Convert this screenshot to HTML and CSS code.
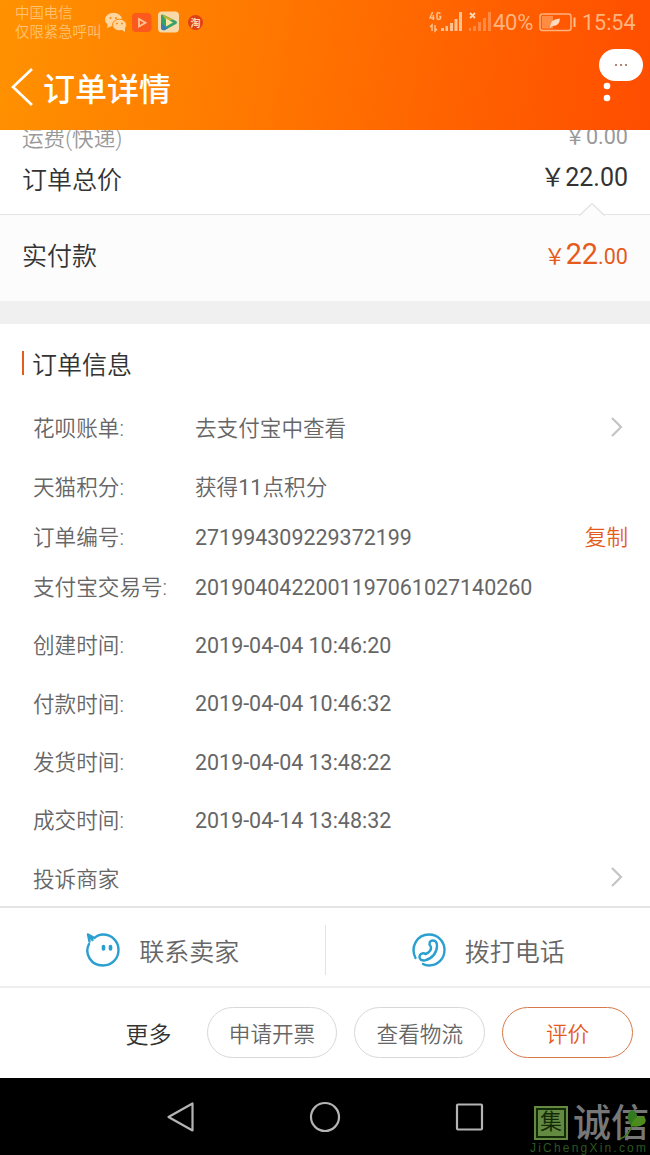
FILE: index.html
```html
<!DOCTYPE html>
<html lang="zh-CN">
<head>
<meta charset="utf-8">
<title>订单详情</title>
<link rel="stylesheet" href="styles.css">
</head>
<body>
<div class="screen">
  <header class="header">
    <div class="status">
      <div class="carrier"><span>中国电信</span><span>仅限紧急呼叫</span></div>
      <svg class="apps" width="102" height="26" viewBox="0 0 102 26">
        <g fill="#ffd6a0"><ellipse cx="9.500" cy="9.500" rx="8.500" ry="6.800"/><path d="M4 14l-1 4 5-2z"/></g>
        <ellipse cx="15.500" cy="15" rx="7" ry="5.800" fill="#ffd6a0" stroke="#ff8b0c"/>
        <path d="M17 19l4 3v-4z" fill="#ffd6a0"/>
        <g fill="#ff8b0c"><circle cx="6.500" cy="8" r="1.100"/><circle cx="12" cy="8" r="1.100"/><circle cx="13" cy="13.500" r="1"/><circle cx="18" cy="13.500" r="1"/></g>
        <rect x="28" y="3" width="19.500" height="19" rx="4" fill="#fb5a1c"/>
        <path d="M35 9l6.500 3.700-6.500 3.800z" fill="none" stroke="#ffc495" stroke-width="1.800"/>
        <rect x="54" y="1.500" width="21" height="21" rx="4" fill="#f8d9a9"/>
        <path d="M57 5q1-1 3 0l12 6q2 1.500 0 3l-11 6q-3 1-4-2z" fill="#36a26a"/>
        <path d="M57 13.500l7 4.500-3 2q-4 1-4-3z" fill="#397cb6"/><path d="M58 4.500l11 5-6 2z" fill="#c7b12a"/>
        <path d="M62 8.500l7 4-7 4z" fill="#f5e6a6"/>
        <circle cx="91.500" cy="12.500" r="7.500" fill="#dc4216"/>
        <text class="app-label" x="86.500" y="16.500">淘</text>
      </svg>
      <svg class="signals" width="64" height="26" viewBox="0 0 64 26">
        <g fill="none" stroke="#ffc18f" stroke-width="1.500"><path d="M3.600 2L1 8h4.500M4.300 5v5M11.500 3.500q-3.500-2-3.500 1v3q0 2 1.700 2 2 0 2-3h-1.500"/><path d="M3 21v-6l-2 2M6 15v6l2-2"/></g>
        <g fill="#ffc18f"><path d="M12 18h3v3h-3zM16.500 16h2.500v5h-2.500zM21 13h3v8h-3zM25.500 9h3v12h-3zM30 2h3v19h-3z"/></g>
        <path d="M41 3l5 5m0-5l-5 5" stroke="#ffd7b7" stroke-width="1.800"/>
        <g fill="#ff8a45"><path d="M40 18h2v3h-2zM44 16h3v5h-3zM49 12h3v9h-3zM54 8h3v13h-3zM59 2h3v19h-3z"/></g>
      </svg>
      <span class="percent">40%</span>
      <svg class="battery" width="38" height="20" viewBox="0 0 38 20">
        <rect x="1" y="1" width="31" height="16.500" rx="2.500" fill="none" stroke="#ffb47d" stroke-width="1.500"/>
        <rect x="3" y="3" width="11" height="12.500" fill="#ff8c42"/>
        <path d="M34.500 4.500h2v9.500h-2z" fill="#ffc18f"/>
        <path d="M11 14q0-8 10-8.500-.500 8-8 7.500l-1.500 2z" fill="#ffdbbd"/>
      </svg>
      <span class="clock">15:54</span>
    </div>
    <div class="titlebar">
      <svg class="back" width="24" height="40" viewBox="0 0 24 40"><path d="M21 2L2 20l19 18" fill="none" stroke="#fff" stroke-width="2.600"/></svg>
      <h1 class="title">订单详情</h1>
      <svg class="kebab" width="8" height="30" viewBox="0 0 8 30"><g fill="#fff"><circle cx="4" cy="5" r="3.300"/><circle cx="4" cy="17" r="3.300"/></g></svg>
    </div>
    <div class="bubble"><i></i><i></i><i></i></div>
  </header>

  <section class="totals">
    <div class="line fee"><span>运费(快递)</span><span class="amount">&#65509;0.00</span></div>
    <div class="line total"><span>订单总价</span><span class="amount">&#65509;22.00</span></div>
  </section>
  <section class="paid">
    <svg class="notch" width="28" height="14" viewBox="0 0 28 14"><path d="M1.500 13.500L14 1.500l12.500 12" fill="#fcfcfc" stroke="#e0e0e0" stroke-width="1.200"/></svg>
    <span>实付款</span><span class="paid-amount">&#65509;<b>22</b>.00</span>
  </section>
  <div class="divider"></div>

  <section class="info">
    <h2 class="info-title">订单信息</h2>
    <div class="row"><span class="label">花呗账单:</span><span class="value cjk">去支付宝中查看</span><svg class="chevron" width="14" height="22" viewBox="0 0 14 22"><path d="M2 2l9 9-9 9" fill="none" stroke="#c4c4c4" stroke-width="2.200"/></svg></div>
    <div class="row tall"><span class="label">天猫积分:</span><span class="value cjk">获得<em>11</em>点积分</span></div>
    <div class="row short"><span class="label">订单编号:</span><span class="value">271994309229372199</span><span class="copy">复制</span></div>
    <div class="row"><span class="label">支付宝交易号:</span><span class="value">2019040422001197061027140260</span></div>
    <div class="row"><span class="label">创建时间:</span><span class="value">2019-04-04 10:46:20</span></div>
    <div class="row tall"><span class="label">付款时间:</span><span class="value">2019-04-04 10:46:32</span></div>
    <div class="row"><span class="label">发货时间:</span><span class="value">2019-04-04 13:48:22</span></div>
    <div class="row"><span class="label">成交时间:</span><span class="value">2019-04-14 13:48:32</span></div>
    <div class="row last"><span class="label">投诉商家</span><span class="value"></span><svg class="chevron" width="14" height="22" viewBox="0 0 14 22"><path d="M2 2l9 9-9 9" fill="none" stroke="#c4c4c4" stroke-width="2.200"/></svg></div>
  </section>

  <section class="contacts">
    <div class="contact">
      <svg width="36" height="36" viewBox="0 0 36 36" fill="none" stroke="#2a9fd0" stroke-width="2.400" stroke-linecap="round" stroke-linejoin="round"><path d="M4 12C-1 22 6 33.500 18 33.500c9 0 15.500-7 15.500-15.500S27 2.500 18 2.500q-5 0-8.500 3.500L3 2.500l1.500 7M3 2.500l4.500 5.500"/><path d="M18.500 14.500v2.500M25.500 14.500v2.500" stroke-width="3.600"/></svg>
      <span>联系卖家</span>
    </div>
    <div class="contact">
      <svg width="36" height="36" viewBox="0 0 36 36" fill="none" stroke="#2a9fd0" stroke-width="2.400" stroke-linecap="round" stroke-linejoin="round"><path d="M4.500 26C-1 15 6 2.500 18 2.500c9 0 15.500 7 15.500 15.500S27 33.500 18 33.500q-3.500 0-6-1.500"/><path d="M22 8.500c-3.500 0-4.500 3.500-2.500 5.500 2 3.500-2 7-5 8-2-1.500-6-.500-6 3 0 2.500 2.500 4 5.500 3.300 7-1.500 12-7.500 12-14.300 0-3.500-1-5.500-4-5.500z"/></svg>
      <span>拨打电话</span>
    </div>
  </section>
  <footer class="actions">
    <span class="more">更多</span><span class="pill">申请开票</span><span class="pill">查看物流</span><span class="pill primary">评价</span>
  </footer>

  <nav class="navbar">
    <svg width="32" height="36" viewBox="0 0 32 36"><path d="M27.500 4.500v27L3.500 18z"/></svg>
    <svg width="32" height="36" viewBox="0 0 32 36"><circle cx="16" cy="18" r="14"/></svg>
    <svg width="32" height="36" viewBox="0 0 32 36"><rect x="3" y="5.500" width="25" height="25" rx="1"/></svg>
    <div class="mark">
      <div class="mark-top"><span class="seal">集</span><span class="mark-name">诚信</span></div>
      <span class="mark-url">JiChengXin.com</span>
      <svg class="leaf" width="30" height="34" viewBox="0 0 30 34"><path d="M0 31q10-4 13-16" fill="none" stroke="#3c7d20" stroke-width="1.500"/><path d="M11 18Q4 6 12 2q6 2 5 8-1 5-6 8z" fill="#337a1f"/><path d="M11 18q2-10 12-10 5 4 1 8-5 4-13 2z" fill="#4b8c1c"/></svg>
    </div>
  </nav>
</div>
</body>
</html>
```
FILE: styles.css
```css
* { box-sizing: border-box; }
body { margin: 0; background: #fff; font-family: Roboto, "Noto Sans CJK SC", sans-serif; font-size: 21.6px; color: #666; }
svg { display: block; flex: none; }
h1, h2 { margin: 0; font-weight: 400; }
.screen { width: 650px; height: 1155px; display: flex; flex-direction: column; overflow: hidden; white-space: nowrap; font-weight: 350; }

.header { position: relative; z-index: 1; flex: none; height: 130px; background: linear-gradient(100deg, #ff9200 0%, #ff7900 38%, #ff6200 70%, #ff4d00 100%); }
.status { height: 45px; display: flex; align-items: center; padding-left: 15px; color: #ffc18f; }
.carrier { width: 89px; display: flex; flex-direction: column; font-size: 14.4px; line-height: 19px; color: #ffc273; }
.app-label { font-size: 10px; fill: #ffd8b4; font-weight: 700; }
.signals { margin-left: 223px; }
.percent { width: 46px; font-size: 22px; letter-spacing: -.3px; font-weight: 400; color: #ffb580; }
.battery { width: 38px; }
.clock { margin-left: 5px; font-size: 21.500px; font-weight: 400; color: #ffb580; }
.titlebar { height: 85px; display: flex; align-items: center; padding: 0 39px 1px 11px; }
.title { flex: 1; margin: 5px 0 0 8px; font-size: 32px; line-height: 48px; color: #fff; font-weight: 500; }
.kebab { margin-top: 18px; }
.bubble { position: absolute; left: 599px; top: 49px; width: 44px; height: 32px; border-radius: 16px; background: #fff; display: flex; align-items: center; justify-content: center; gap: 2.500px; }
.bubble i { width: 2.300px; height: 2.300px; border-radius: 50%; background: #9a5a48; }

.totals { height: 84px; flex: none; padding: 0 22px; }
.line { display: flex; justify-content: space-between; }
.fee { height: 28px; line-height: 34px; margin-top: -8px; color: #999; }
.fee .amount { line-height: 29px; font-weight: 400; }
.total { margin-top: 9px; font-size: 25px; line-height: 43px; color: #333; }
.total .amount { line-height: 37px; font-weight: 400; }
.paid { position: relative; flex: none; height: 87px; border-top: 1px solid #e4e4e4; background: #fcfcfc; padding: 0 22px 9px; display: flex; justify-content: space-between; align-items: center; font-size: 25px; color: #333; }
.notch { position: absolute; left: 578px; top: -13px; }
.paid-amount { color: #e55b1c; font-size: 21.6px; font-weight: 400; }
.paid-amount b { font-weight: 400; font-size: 28.800px; }
.divider { flex: none; height: 23px; background: #f0f0f0; }

.info { flex: none; height: 582px; padding: 0 22px; }
.info-title { padding-top: 26px; height: 75px; line-height: 31px; font-size: 25px; color: #333; display: flex; align-items: flex-start; font-weight: 350; }
.info-title::before { content: ""; width: 2px; height: 24px; background: #e55b1c; margin: 1px 8px 0 0; }
.row { height: 58px; display: flex; align-items: center; padding-left: 11px; }
.row.tall { height: 59px; }
.row.short { height: 42px; }
.row.last { height: 57px; }
.label { width: 162px; flex: none; padding-bottom: 3px; }
.value { flex: 1; font-size: 21.450px; font-weight: 400; }
.value.cjk { font-size: 21.6px; font-weight: 350; padding-bottom: 3px; }
.value em { font-style: normal; font-weight: 400; }
.row.last .label { padding-bottom: 1px; }
.chevron { margin: 0 4px 2px 0; }
.copy { color: #e55b1c; padding-bottom: 3px; }

.contacts { flex: none; height: 82px; border-top: 2px solid #e4e4e4; border-bottom: 2px solid #eee; display: flex; align-items: center; padding-top: 6px; }
.contact { flex: 1; height: 50px; display: flex; align-items: center; justify-content: center; gap: 18px; font-size: 25px; }
.contact + .contact { border-left: 1px solid #e4e4e4; }
.actions { flex: none; height: 90px; display: flex; align-items: center; justify-content: flex-end; gap: 17px; padding: 0 17px 1px 0; }
.more { font-size: 23px; color: #333; margin-right: 18px; }
.pill { width: 130.800px; height: 51px; border: 1px solid #d8d8d8; border-radius: 26px; display: flex; align-items: center; justify-content: center; }
.primary { border-color: #d67a48; color: #e55b1c; }

.navbar { flex: none; position: relative; height: 77px; background: #000; display: flex; align-items: center; justify-content: center; gap: 112.500px; }
.navbar > svg { fill: none; stroke: #b4b4b4; stroke-width: 2.200; stroke-linejoin: round; }
.mark { position: absolute; left: 530px; top: 26px; width: 120px; height: 51px; }
.mark-top { display: flex; align-items: center; height: 38px; padding-left: 4px; gap: 5px; }
.seal { width: 34px; height: 34px; background: #648a42; color: #142b09; font-size: 22px; font-weight: 400; line-height: 32px; text-align: center; outline: 2px solid #142b09; outline-offset: -4px; }
.mark-name { font-size: 38px; line-height: 38px; color: #777; font-weight: 500; }
.mark-url { display: block; font-family: "Liberation Sans", Arial, sans-serif; font-size: 12px; line-height: 13px; letter-spacing: 2.200px; color: #2b5720; font-weight: 400; }
.leaf { position: absolute; left: 90px; top: 4px; }
```
